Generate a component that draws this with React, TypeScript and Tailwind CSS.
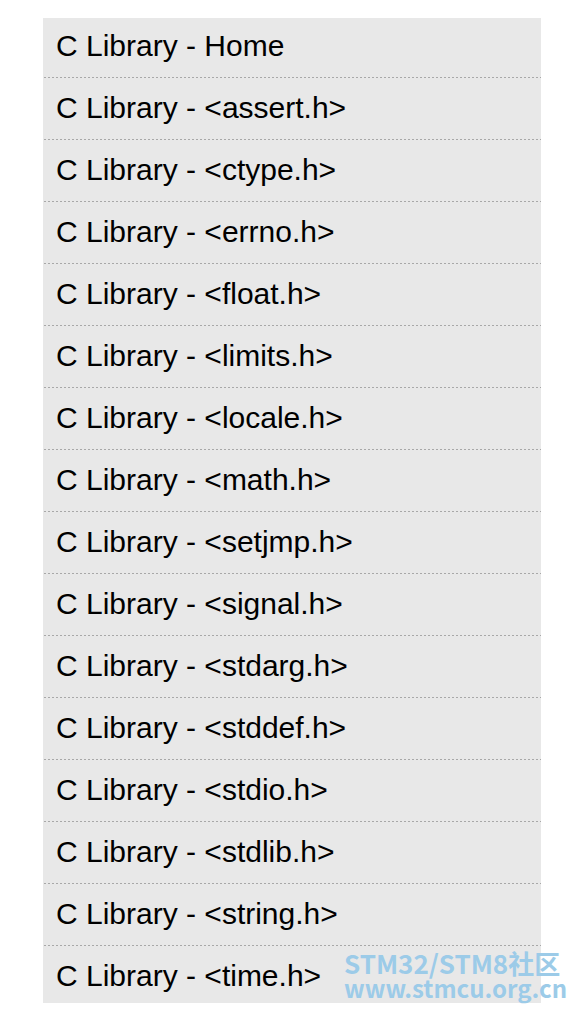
const items = [
  'C Library - Home',
  'C Library - <assert.h>',
  'C Library - <ctype.h>',
  'C Library - <errno.h>',
  'C Library - <float.h>',
  'C Library - <limits.h>',
  'C Library - <locale.h>',
  'C Library - <math.h>',
  'C Library - <setjmp.h>',
  'C Library - <signal.h>',
  'C Library - <stdarg.h>',
  'C Library - <stddef.h>',
  'C Library - <stdio.h>',
  'C Library - <stdlib.h>',
  'C Library - <string.h>',
  'C Library - <time.h>',
];

export default function App() {
  return (
    <div className="relative min-h-[1010px] bg-white pt-[18px] pl-[43px] font-['Liberation_Sans',Arial,sans-serif]">
      <ul className="w-[498px] bg-[#e8e8e8]">
        {items.map((label, i) => {
          const first = i === 0;
          const last = i === items.length - 1;
          return (
            <li
              key={label}
              className={`flex flex-col ${first ? 'h-[59px]' : last ? 'h-[58px]' : 'h-[62px]'}`}
            >
              {!first && (
                <div className="h-px ml-px bg-[repeating-linear-gradient(to_right,#a8a8a8_0,#a8a8a8_2px,transparent_2px,transparent_4px)]" />
              )}
              <a
                href="#"
                className={`pl-[13px] text-[30px] leading-[30px] text-black ${first ? 'pt-[13px]' : 'pt-[15px]'}`}
              >
                {label}
              </a>
            </li>
          );
        })}
      </ul>

      <div className="absolute left-[344px] top-[949px] whitespace-nowrap font-bold text-[#9ccbe8] font-['Noto_Sans_CJK_SC',sans-serif]">
        <div className="text-[26px] leading-[28px]">STM32/STM8社区</div>
        <div className="text-[24px] leading-[22px]">www.stmcu.org.cn</div>
      </div>
    </div>
  );
}
